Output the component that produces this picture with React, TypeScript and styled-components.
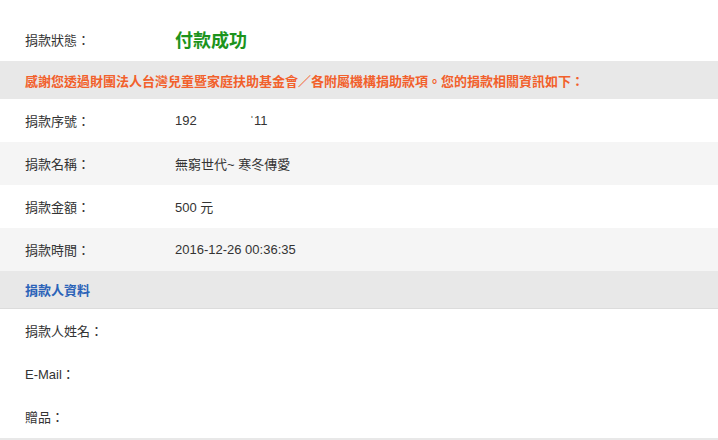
import React from "react";
import styled, { createGlobalStyle } from "styled-components";

const Global = createGlobalStyle`
  html, body { margin: 0; padding: 0; background: #fff; }
  body { font-family: "Liberation Sans", "Noto Sans CJK TC", sans-serif; color: #333; }
`;

const Page = styled.div`
  width: 718px;
  height: 440px;
  overflow: hidden;
  display: flex;
  flex-direction: column;
`;

const Row = styled.div<{ $shade?: boolean; $h?: number; $pt?: number }>`
  display: grid;
  grid-template-columns: 150px 1fr;
  align-items: center;
  height: ${(p) => p.$h ?? 43}px;
  padding: ${(p) => p.$pt ?? 0}px 0 0 25px;
  box-sizing: border-box;
  background: ${(p) => (p.$shade ? "#f5f5f5" : "#ffffff")};
  font-size: 13px;
  color: #333;
`;

const Label = styled.div`
  white-space: nowrap;
`;

const Value = styled.div<{ $status?: boolean }>`
  white-space: nowrap;
  ${(p) =>
    p.$status &&
    `font-size: 18px; font-weight: bold; color: #1c941c;`}
`;

const Masked = styled.span`
  display: inline-block;
  width: 53px;
`;

const Banner = styled.div<{ $tone: "orange" | "blue" }>`
  height: 38px;
  display: flex;
  align-items: center;
  padding-left: 25px;
  background: #e8e8e8;
  font-size: 13px;
  font-weight: bold;
  white-space: nowrap;
  color: ${(p) => (p.$tone === "orange" ? "#f2602b" : "#2b63b8")};
  border-bottom: ${(p) => (p.$tone === "blue" ? "1px solid #dcdcdc" : "none")};
  box-sizing: border-box;
`;

const Footer = styled.div`
  height: 2px;
  background: #e8e8e8;
`;

const DonorRow = styled(Row)`
  grid-template-columns: auto 1fr;
`;

export default function App() {
  return (
    <Page>
      <Global />
      <Row $h={61} $pt={17}>
        <Label>捐款狀態：</Label>
        <Value $status>付款成功</Value>
      </Row>
      <Banner $tone="orange">
        感謝您透過財團法人台灣兒童暨家庭扶助基金會／各附屬機構捐助款項。您的捐款相關資訊如下：
      </Banner>
      <Row>
        <Label>捐款序號：</Label>
        <Value>
          192<Masked />ˈ11
        </Value>
      </Row>
      <Row $shade>
        <Label>捐款名稱：</Label>
        <Value>無窮世代~ 寒冬傳愛</Value>
      </Row>
      <Row>
        <Label>捐款金額：</Label>
        <Value>500 元</Value>
      </Row>
      <Row $shade>
        <Label>捐款時間：</Label>
        <Value>2016-12-26 00:36:35</Value>
      </Row>
      <Banner $tone="blue">捐款人資料</Banner>
      <DonorRow>
        <Label>捐款人姓名：</Label>
        <Value></Value>
      </DonorRow>
      <DonorRow>
        <Label>E-Mail：</Label>
        <Value></Value>
      </DonorRow>
      <DonorRow>
        <Label>贈品：</Label>
        <Value></Value>
      </DonorRow>
      <Footer />
    </Page>
  );
}
